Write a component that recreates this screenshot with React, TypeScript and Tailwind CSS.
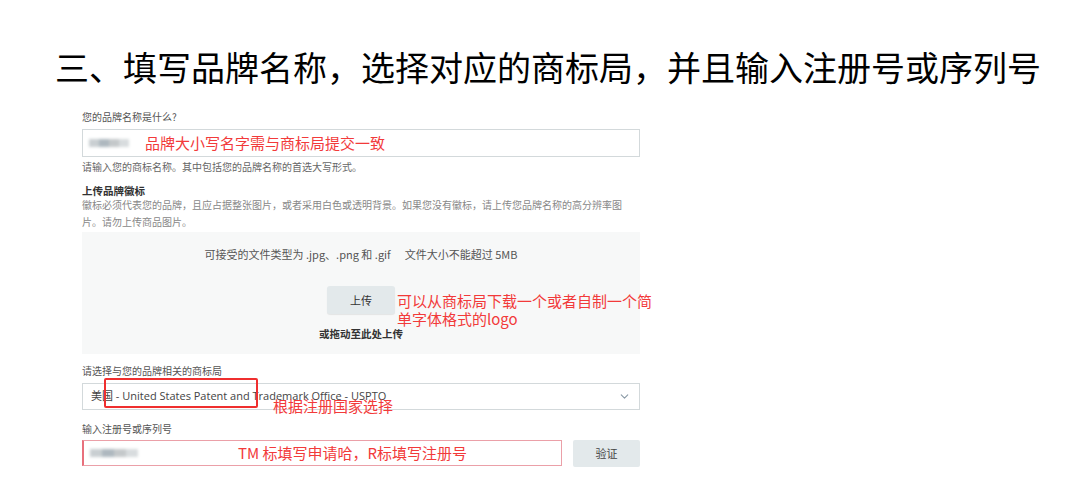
import { ChevronDown } from 'lucide-react';

const cjk = { fontFamily: '"Noto Sans CJK SC", "Noto Sans", sans-serif' };
const ui = { fontFamily: '"Open Sans", "Noto Sans CJK SC", sans-serif' };

function Blur({ w }: { w: number }) {
  // 打码的占位文字
  return (
    <div className="flex h-[8px] items-center blur-[1.5px]" style={{ width: w }}>
      <div className="h-full flex-1 bg-[#c9cfd2]" />
      <div className="h-full flex-1 bg-[#aeb8bf]" />
      <div className="h-full flex-1 bg-[#c4c8ca]" />
      <div className="h-full flex-1 bg-[#d8dcde]" />
    </div>
  );
}

export default function App() {
  return (
    <div className="relative h-[478px] w-[1080px] overflow-hidden bg-white" style={cjk}>
      <h1 className="pl-[55px] pt-[47px] text-[34px] font-normal leading-[40px] text-black">
        三、填写品牌名称，选择对应的商标局，并且输入注册号或序列号
      </h1>

      <div className="relative ml-[82px] mt-[23px] w-[558px] text-[#555]">
        <p className="text-[10px] leading-[14px]">您的品牌名称是什么?</p>
        <div className="mt-[5px] flex h-[28px] items-center border border-[#d3d9db] pl-[6px]">
          <Blur w={40} />
          <span className="ml-[16px] whitespace-nowrap text-[15px] leading-[18px] text-[#f23a3a]">
            品牌大小写名字需与商标局提交一致
          </span>
        </div>
        <p className="mt-[3px] text-[10px] leading-[14px] text-[#666]">
          请输入您的商标名称。其中包括您的品牌名称的首选大写形式。
        </p>

        <p className="mt-[11px] text-[10.5px] font-bold leading-[12px] text-[#333]">上传品牌徽标</p>
        <p className="mt-[-1px] text-[10px] leading-[17px] text-[#888]">
          徽标必须代表您的品牌，且应占据整张图片，或者采用白色或透明背景。如果您没有徽标，请上传您品牌名称的高分辨率图片。请勿上传商品图片。
        </p>

        <div className="relative mt-[2px] flex h-[122px] flex-col items-center bg-[#f7f8f8]">
          <p className="pt-[15px] text-[11px] leading-[14px] text-[#555]">
            可接受的文件类型为 .jpg、.png 和 .gif<span className="ml-[14px]">文件大小不能超过 5MB</span>
          </p>
          <button className="mt-[25px] h-[28px] w-[68px] rounded-[3px] bg-[#e3e9eb] text-[11px] text-[#333] shadow-[0_1px_1px_rgba(0,0,0,0.08)]">
            上传
          </button>
          <p className="mt-[13px] text-[10.5px] font-bold leading-[14px] text-[#333]">或拖动至此处上传</p>
          <div className="absolute left-[315px] top-[60px] whitespace-nowrap text-[15px] leading-[18px] text-[#f23a3a]">
            <p>可以从商标局下载一个或者自制一个简</p>
            <p>单字体格式的logo</p>
          </div>
        </div>

        <p className="mt-[10px] text-[10px] leading-[14px]">请选择与您的品牌相关的商标局</p>
        <div className="mt-[5px] flex h-[27px] items-center justify-between border border-[#d3d9db] pl-[8px] pr-[8px]">
          <span className="text-[11px] text-[#444]" style={ui}>
            美国 - United States Patent and Trademark Office - USPTO
          </span>
          <ChevronDown size={13} strokeWidth={2} className="text-[#8a9aa6]" />
        </div>

        <p className="mt-[12px] text-[10px] leading-[14px]">输入注册号或序列号</p>
        <div className="mt-[4px] flex gap-[11px]">
          <div className="flex h-[26px] w-[481px] items-center border border-l-2 border-[#eba0a8] border-l-[#e8707c] pl-[6px]">
            <Blur w={48} />
            <span className="ml-[100px] whitespace-nowrap text-[15px] leading-[18px] text-[#f23a3a]">
              TM 标填写申请哈，R标填写注册号
            </span>
          </div>
          <button className="h-[27px] w-[67px] rounded-[2px] bg-[#e3e9eb] text-[11px] text-[#444]">验证</button>
        </div>

        <div className="absolute left-[22px] top-[268px] h-[30px] w-[154px] rounded-[2px] border-2 border-[#ef2f2f]" />
        <p className="absolute left-[191px] top-[287px] whitespace-nowrap text-[15px] leading-[18px] text-[#f23a3a]">
          根据注册国家选择
        </p>
      </div>
    </div>
  );
}
